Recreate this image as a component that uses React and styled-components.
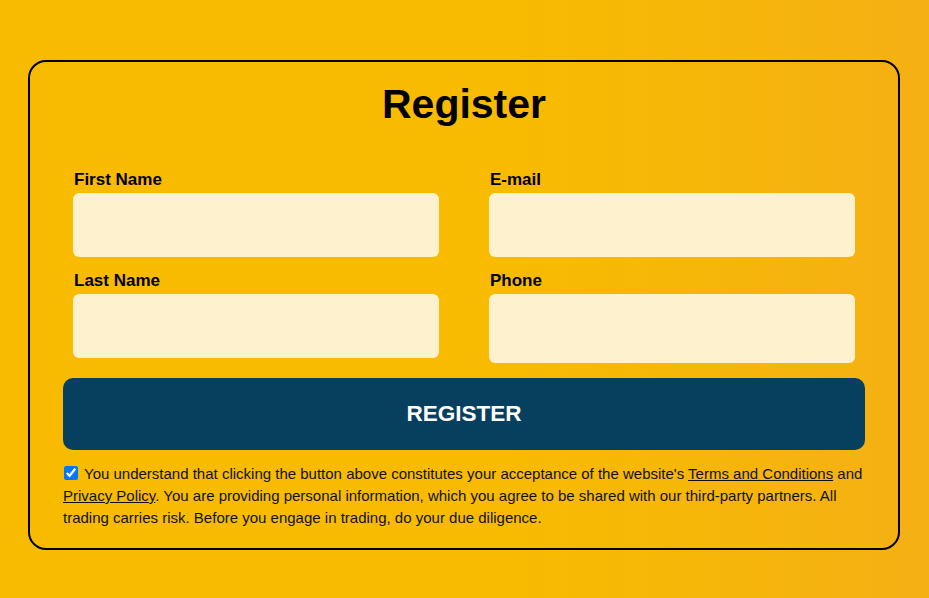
import React, { useState } from 'react';
import styled, { createGlobalStyle } from 'styled-components';

const GlobalStyle = createGlobalStyle`
  html, body {
    margin: 0;
    padding: 0;
  }
  body {
    min-height: 598px;
    background: linear-gradient(90deg, #f8bb00 0%, #f8bb00 55%, #f5b014 100%);
    font-family: 'Liberation Sans', Arial, sans-serif;
    color: #000;
  }
`;

const Page = styled.div`
  padding: 60px 29px 48px 28px;
`;

const Card = styled.form`
  border: 2px solid #000;
  border-radius: 18px;
  padding: 19px 33px 19px 33px;
`;

const Title = styled.h1`
  margin: 0 0 43px;
  font-size: 41px;
  line-height: 46px;
  font-weight: 700;
  text-align: center;
`;

const Fields = styled.div`
  display: grid;
  grid-template-columns: 1fr 1fr;
  column-gap: 50px;
  row-gap: 14px;
  padding: 0 10px;
  margin-bottom: 15px;
  align-items: start;
`;

const Field = styled.div`
  display: flex;
  flex-direction: column;
`;

const Label = styled.label`
  font-size: 17px;
  line-height: 20px;
  font-weight: 700;
  margin: 0 0 3px 1px;
`;

const Input = styled.input`
  box-sizing: border-box;
  height: ${p => p.$tall ? 69 : 64}px;
  width: 100%;
  border: none;
  border-radius: 6px;
  background: #fef1cd;
  padding: 0 14px;
  font-size: 16px;
  font-family: inherit;
  outline: none;
`;

const Submit = styled.button`
  display: block;
  width: 100%;
  height: 72px;
  border: none;
  border-radius: 10px;
  background: #07405e;
  color: #fff;
  font-family: inherit;
  font-size: 22.5px;
  font-weight: 700;
  cursor: pointer;
`;

const Consent = styled.p`
  margin: 13px 0 0;
  font-size: 15px;
  line-height: 22px;
  color: #111;
`;

const Check = styled.input`
  width: 14px;
  height: 14px;
  margin: 0 6px 0 1px;
  vertical-align: -1px;
`;

const Link = styled.a`
  color: #111;
  text-decoration: underline;
`;

const fields = [
  { name: 'firstName', label: 'First Name' },
  { name: 'email', label: 'E-mail' },
  { name: 'lastName', label: 'Last Name' },
  { name: 'phone', label: 'Phone', tall: true },
];

export default function App() {
  const [agreed, setAgreed] = useState(true);
  return (
    <Page>
      <GlobalStyle />
      <Card onSubmit={e => e.preventDefault()}>
        <Title>Register</Title>
        <Fields>
          {fields.map(f => (
            <Field key={f.name}>
              <Label htmlFor={f.name}>{f.label}</Label>
              <Input id={f.name} name={f.name} $tall={f.tall} />
            </Field>
          ))}
        </Fields>
        <Submit type="submit">REGISTER</Submit>
        <Consent>
          <Check type="checkbox" checked={agreed} onChange={() => setAgreed(!agreed)} />
          You understand that clicking the button above constitutes your acceptance of the website's{' '}
          <Link href="#">Terms and Conditions</Link> and <Link href="#">Privacy Policy</Link>. You are
          providing personal information, which you agree to be shared with our third-party partners.
          All trading carries risk. Before you engage in trading, do your due diligence.
        </Consent>
      </Card>
    </Page>
  );
}
